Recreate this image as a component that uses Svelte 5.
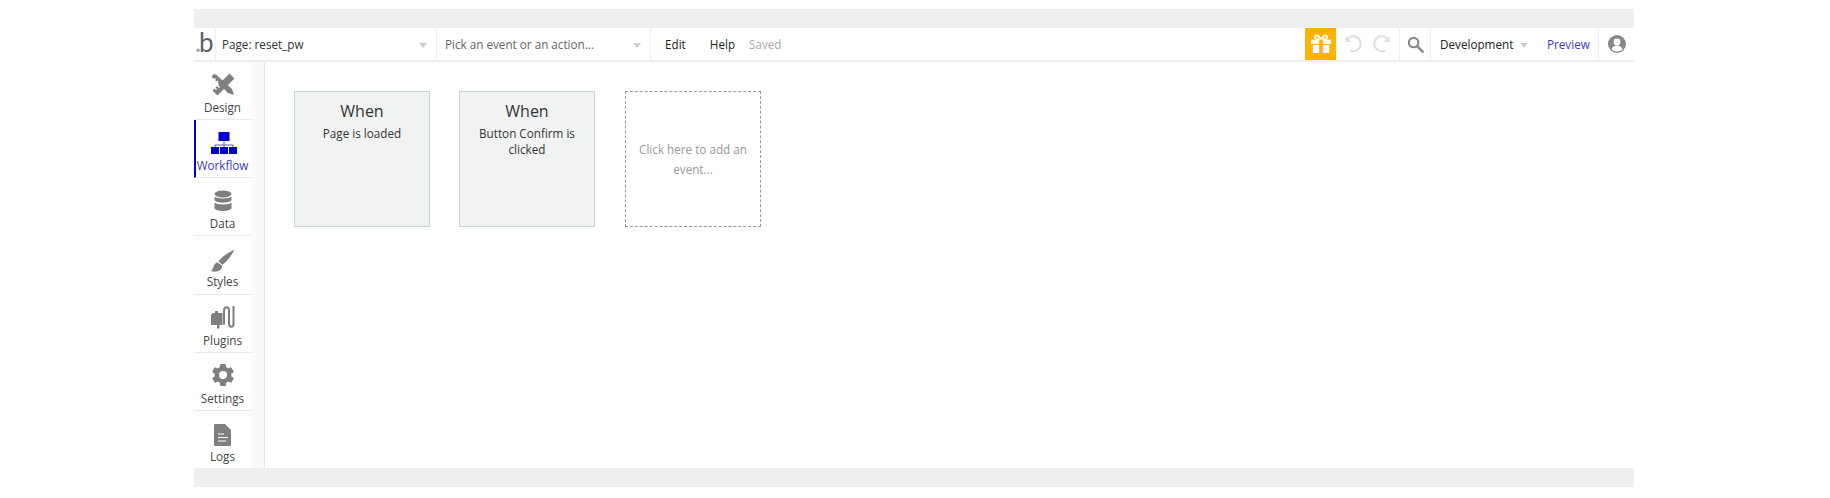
<script>
  const tools = [
    { id: 'design', label: 'Design' },
    { id: 'workflow', label: 'Workflow', active: true },
    { id: 'data', label: 'Data' },
    { id: 'styles', label: 'Styles' },
    { id: 'plugins', label: 'Plugins' },
    { id: 'settings', label: 'Settings' },
    { id: 'logs', label: 'Logs' }
  ];
</script>

<div class="page">
  <div class="frame">
    <div class="band"></div>
    <header class="topbar">
      <div class="logo"><span class="dot">.</span><span class="bee">b</span></div>
      <div class="select page-select"><span>Page: reset_pw</span><i class="caret"></i></div>
      <div class="select event-select"><span>Pick an event or an action...</span><i class="caret"></i></div>
      <nav class="menu">
        <span>Edit</span>
        <span>Help</span>
        <span class="saved">Saved</span>
      </nav>
      <div class="right">
        <div class="gift">
          <svg width="22" height="20" viewBox="0 0 24 22">
            <path d="M12 6C9 1 7 1 6 2c-1.500 1.500 0 4 2 4zM12 6c3-5 5-5 6-4 1.500 1.500 0 4-2 4z" fill="none" stroke="#fff" stroke-width="2"/>
            <path d="M1 6h22v5H1zM3 12h18v9H3z" fill="#fff"/>
            <rect x="10" y="6" width="4" height="15" fill="#ffb300"/>
          </svg>
        </div>
        <div class="hist">
          <svg width="20" height="20" viewBox="0 0 20 20"><path d="M3 5.500A7.500 7.500 0 1 1 6 16.500" fill="none" stroke="#dedede" stroke-width="2"/><path d="M1.500 2v6h6z" fill="#dedede"/></svg>
          <svg width="20" height="20" viewBox="0 0 20 20"><path d="M17 5.500A7.500 7.500 0 1 0 14 16.500" fill="none" stroke="#dedede" stroke-width="2"/><path d="M18.500 2v6h-6z" fill="#dedede"/></svg>
        </div>
        <div class="search">
          <svg width="17" height="17" viewBox="0 0 18 18"><circle cx="7" cy="7" r="5" fill="none" stroke="#888" stroke-width="2.200"/><path d="M10.800 10.800l5.700 5.700" stroke="#888" stroke-width="2.600" stroke-linecap="round"/></svg>
        </div>
        <div class="env"><span>Development</span><i class="caret"></i></div>
        <div class="preview">Preview</div>
        <div class="account">
          <svg width="18" height="18" viewBox="0 0 18 18"><circle cx="9" cy="9" r="9" fill="#888"/><circle cx="9" cy="7" r="3.400" fill="#fff"/><path d="M3.500 14.500c.8-3 3-4 5.500-4s4.700 1 5.500 4A7.500 7.500 0 0 1 9 16.500a7.500 7.500 0 0 1-5.500-2z" fill="#fff"/></svg>
        </div>
      </div>
    </header>

    <div class="body">
      <aside class="tools">
        {#each tools as t}
          <div class="tool" class:active={t.active}>
            <div class="ico">
              {#if t.id === 'design'}
                <svg width="24" height="24" viewBox="0 0 24 24" fill="#7f7f7f">
                  <path d="M3.500 0.500L0.500 3.500 3 6l1-1 1 1-1 1 1.500 1.500 1-1 1 1-1 1 10.500 10.500 6 2-2-6L5 1.500 4.500 2z" />
                  <path d="M18.500 0.500L23.500 5.500 6.500 22.500 1.500 17.500l2-2 1.500 1.500 1-1-1.500-1.500 1.500-1.500 2 2 1-1-2-2 1.500-1.500 1.500 1.500 1-1-1.500-1.500z"/>
                </svg>
              {:else if t.id === 'workflow'}
                <svg width="28" height="22" viewBox="0 0 28 22">
                  <rect x="8.500" y="0" width="11" height="9" fill="#0000d6"/>
                  <path d="M14 9v4M5 16v-3h18v3M14 13v3" stroke="#5a5ad0" fill="none"/>
                  <rect x="1" y="15" width="8" height="7" fill="#0000d6"/>
                  <rect x="10" y="15" width="8" height="7" fill="#0000d6"/>
                  <rect x="19" y="15" width="8" height="7" fill="#0000d6"/>
                </svg>
              {:else if t.id === 'data'}
                <svg width="20" height="22" viewBox="0 0 20 22" fill="#7f7f7f">
                  <ellipse cx="10" cy="4" rx="8.500" ry="3.500"/>
                  <path d="M1.500 6.500c2 2.500 15 2.500 17 0V10c-1 3.500-16 3.500-17 0z"/>
                  <path d="M1.500 12.500c2 2.500 15 2.500 17 0V18c-1 4-16 4-17 0z"/>
                </svg>
              {:else if t.id === 'styles'}
                <svg class="low" width="24" height="24" viewBox="0 0 24 24" fill="#7f7f7f">
                  <path d="M23.500 0.500C17 3.500 10 8.500 7.500 12.500l4 3.500C15.500 12.500 20.500 7 23.500 0.500z"/>
                  <path d="M6.500 13.500c-3 .5-3.500 3-4.200 5-.4 1.300-1.300 2.500-2.300 3.500 3.500 1.500 10 .5 11-3.500.2-1 0-1.800-.5-2.300z"/>
                </svg>
              {:else if t.id === 'plugins'}
                <svg width="25" height="24" viewBox="0 0 25 24">
                  <path d="M1 9.500L3 8h2V6h3v2h4.500v12H9.500v3.500h-2.500V20H1z" fill="#7f7f7f"/>
                  <path d="M14 19.500V5.500c0-4.500 5-4.500 5 0V19c0 3.500 4.500 3.500 4.500 0V1" fill="none" stroke="#7f7f7f" stroke-width="2"/>
                </svg>
              {:else if t.id === 'settings'}
                <svg width="24" height="24" viewBox="0 0 24 24">
                  <g fill="#7f7f7f">
                    <circle cx="12" cy="12" r="8.500"/>
                    <rect x="9" y="1" width="6" height="22" rx="1"/>
                    <rect x="9" y="1" width="6" height="22" rx="1" transform="rotate(60 12 12)"/>
                    <rect x="9" y="1" width="6" height="22" rx="1" transform="rotate(120 12 12)"/>
                  </g>
                  <circle cx="12" cy="12" r="4" fill="#fff"/>
                </svg>
              {:else}
                <svg class="low" width="18" height="24" viewBox="0 0 18 24">
                  <path d="M1 1h10l6 6v15a1 1 0 0 1-1 1H1a1 1 0 0 1-1-1V2a1 1 0 0 1 1-1z" fill="#7f7f7f"/>
                  <path d="M4 11h6M4 14.500h10M4 18h8" stroke="#fff" stroke-width="1.200"/>
                </svg>
              {/if}
            </div>
            <div class="lbl">{t.label}</div>
          </div>
        {/each}
      </aside>
      <div class="gutter"></div>
      <main class="canvas">
        <div class="card">
          <div class="when">When</div>
          <div class="desc">Page is loaded</div>
        </div>
        <div class="card">
          <div class="when">When</div>
          <div class="desc">Button Confirm is clicked</div>
        </div>
        <div class="card add">Click here to add an event...</div>
      </main>
    </div>
    <div class="band foot"></div>
  </div>
</div>

<style>
  :global(body) { margin: 0; background: #fff; }
  .page {
    width: 1830px;
    height: 498px;
    padding: 9px 196px 0 194px;
    box-sizing: border-box;
    font-family: "Open Sans", "Noto Sans", sans-serif;
    font-size: 11.7px;
    color: #333;
    overflow: hidden;
  }
  .frame { width: 1440px; display: flex; flex-direction: column; }
  .band { height: 19px; background: #efefef; }
  .topbar {
    height: 32px;
    display: flex;
    align-items: stretch;
    border-bottom: 2px solid #eeeeee;
    background: #fff;
    box-sizing: content-box;
  }
  .logo {
    width: 22px;
    border-right: 1px solid #eee;
    font-family: "Lato", "Open Sans", sans-serif;
    font-size: 26px;
    line-height: 28px;
    display: flex;
    flex: none;
    box-sizing: border-box;
    padding-left: 1px;
  }
  .dot { color: #9aa5ad; width: 3px; }
  .bee { color: #59626a; margin-left: 1px; }
  .select {
    display: flex;
    align-items: center;
    justify-content: space-between;
    border-right: 1px solid #eee;
    padding: 0 9px 0 6px;
    box-sizing: border-box;
    flex: none;
  }
  .page-select { width: 221px; }
  .event-select { width: 214px; color: #666; padding-left: 8px; }
  .caret {
    display: block;
    width: 0;
    height: 0;
    border-left: 4.500px solid transparent;
    border-right: 4.500px solid transparent;
    border-top: 5px solid #c6cdd1;
    margin-top: 2px;
  }
  .menu {
    display: flex;
    align-items: center;
    gap: 24px;
    padding-left: 14px;
    color: #222;
  }
  .saved { color: #aaa; margin-left: -10px; }
  .right { margin-left: auto; display: flex; align-items: stretch; }
  .gift {
    width: 31px;
    background: #ffb300;
    display: flex;
    align-items: center;
    justify-content: center;
  }
  .hist {
    width: 64px;
    display: flex;
    align-items: center;
    justify-content: space-around;
    box-sizing: border-box;
    padding: 0 5px;
    border-right: 1px solid #eee;
  }
  .search {
    width: 30px;
    display: flex;
    align-items: center;
    justify-content: center;
    border-right: 1px solid #eee;
  }
  .env {
    width: 114px;
    display: flex;
    align-items: center;
    gap: 7px;
    padding-left: 9px;
    box-sizing: border-box;
    color: #222;
    flex: none;
  }
  .preview {
    color: #3a3ac8;
    display: flex;
    align-items: center;
    width: 64px;
    padding-left: 12px;
    margin-left: -10px;
    box-sizing: border-box;
    border-right: 1px solid #eee;
    flex: none;
  }
  .account {
    width: 35px;
    display: flex;
    align-items: center;
    justify-content: center;
  }
  .body { display: flex; height: 406px; }
  .tools { width: 57px; flex: none; display: flex; flex-direction: column; }
  .tool {
    flex: 1;
    min-height: 0;
    border-bottom: 1px solid #e8e8e8;
    display: flex;
    flex-direction: column;
    align-items: center;
    box-sizing: border-box;
    padding-top: 10px;
    color: #444;
  }
  .tool:last-child { border-bottom: 0; }
  .tool.active {
    border-left: 2px solid #0000d6;
    color: #3a3ac8;
  }
  .tool.active .lbl { margin-left: -2px; }
  .ico { height: 25px; display: flex; align-items: center; justify-content: center; }
  .low { position: relative; top: 2px; }
  .lbl { margin-top: 3px; line-height: 15px; }
  .gutter {
    width: 13px;
    flex: none;
    background: #fafafa;
    border-right: 1px solid #e6e6e6;
  }
  .canvas {
    flex: 1;
    display: flex;
    align-items: flex-start;
    padding: 29px 0 0 29px;
  }
  .card {
    width: 136px;
    height: 136px;
    box-sizing: border-box;
    background: #f1f3f2;
    border: 1px solid #c5d5d5;
    text-align: center;
    padding: 8px 8px 0;
    flex: none;
    margin-right: 29px;
  }
  .when { font-size: 16px; line-height: 22px; color: #333; }
  .desc { font-size: 11.7px; line-height: 16px; margin-top: 3px; color: #333; }
  .add {
    background: #fff;
    border: 1px dashed #999;
    display: flex;
    align-items: center;
    justify-content: center;
    color: #999;
    line-height: 20px;
    padding: 0 8px;
    margin-left: 1px;
  }
</style>
